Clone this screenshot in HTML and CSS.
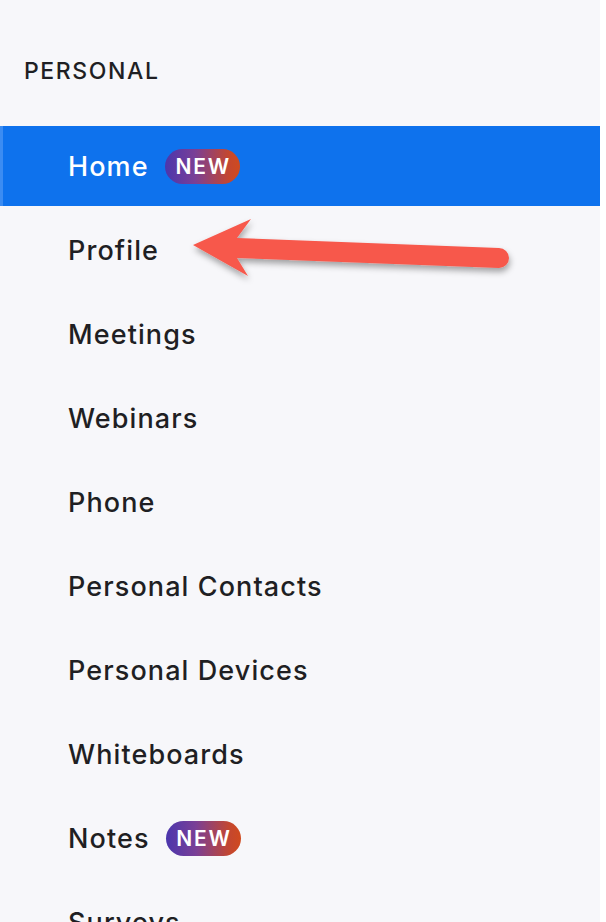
FILE: index.html
```html
<!DOCTYPE html>
<html>
<head>
<meta charset="utf-8">
<link rel="stylesheet" href="styles.css">
</head>
<body>
<nav class="sidebar">
  <div class="section-title">PERSONAL</div>
  <ul class="menu">
    <li class="item active"><span class="label">Home</span><span class="badge">NEW</span></li>
    <li class="item"><span class="label">Profile</span></li>
    <li class="item"><span class="label">Meetings</span></li>
    <li class="item"><span class="label">Webinars</span></li>
    <li class="item"><span class="label">Phone</span></li>
    <li class="item"><span class="label">Personal Contacts</span></li>
    <li class="item"><span class="label">Personal Devices</span></li>
    <li class="item"><span class="label">Whiteboards</span></li>
    <li class="item"><span class="label">Notes</span><span class="badge">NEW</span></li>
    <li class="item"><span class="label">Surveys</span></li>
  </ul>
  <svg class="arrow" width="340" height="80" viewBox="0 0 340 80">
    <defs>
      <filter id="sh" x="-10%" y="-30%" width="120%" height="160%">
        <feDropShadow dx="1" dy="4" stdDeviation="3" flood-color="#000" flood-opacity="0.35"/>
      </filter>
    </defs>
    <g filter="url(#sh)" fill="#f7584c">
      <path d="M13 35 L71 9 L57 28 L319 38 A10 10 0 0 1 319 58 L57 48 L68 66 Z"/>
    </g>
  </svg>
</nav>
</body>
</html>
```
FILE: styles.css
```css
html, body {
  margin: 0;
  padding: 0;
  background: #ffffff;
}
.sidebar {
  position: relative;
  width: 600px;
  height: 922px;
  overflow: hidden;
  background: #f7f7fa;
  font-family: Inter, "Noto Sans", sans-serif;
  color: #1f1f23;
}
.section-title {
  padding: 57px 0 0 24px;
  height: 126px;
  box-sizing: border-box;
  font-size: 23px;
  font-weight: 500;
  letter-spacing: 1.6px;
  line-height: 28px;
}
.menu {
  list-style: none;
  margin: 0;
  padding: 0;
  display: flex;
  flex-direction: column;
  gap: 4px;
}
.item {
  height: 80px;
  display: flex;
  align-items: center;
  padding-left: 68px;
  box-sizing: border-box;
  font-size: 27px;
  font-weight: 500;
  letter-spacing: 1.1px;
}
.item.active {
  background: #0e72ed;
  color: #ffffff;
  border-left: 3px solid #3b8cf2;
  padding-left: 65px;
}
.badge {
  margin-left: 16px;
  height: 35px;
  width: 75px;
  border-radius: 18px;
  background: linear-gradient(90deg, #4b36ad 0%, #7a3f96 40%, #c4472f 85%, #d04a1e 100%);
  color: #ffffff;
  font-size: 21px;
  font-weight: 600;
  letter-spacing: 1.8px;
  display: flex;
  align-items: center;
  justify-content: center;
  padding-left: 2px;
  box-sizing: border-box;
}
.arrow {
  position: absolute;
  left: 180px;
  top: 210px;
}
```
